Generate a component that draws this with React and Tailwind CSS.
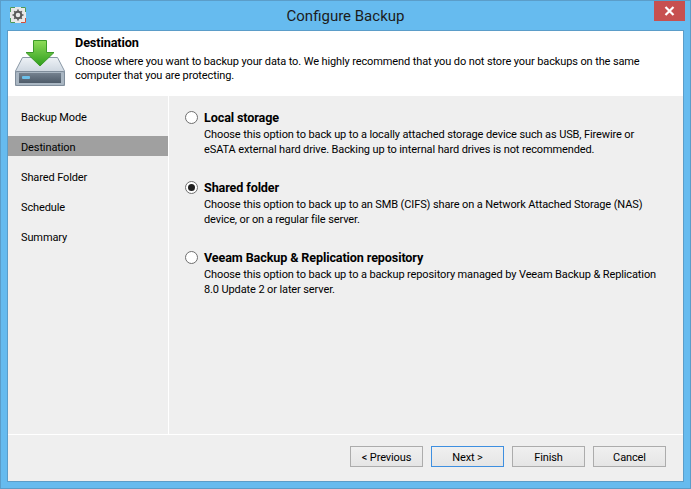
const steps = ['Backup Mode', 'Destination', 'Shared Folder', 'Schedule', 'Summary'];

const options = [
  {
    title: 'Local storage',
    desc: ['Choose this option to back up to a locally attached storage device such as USB, Firewire or', 'eSATA external hard drive. Backing up to internal hard drives is not recommended.'],
  },
  {
    title: 'Shared folder',
    checked: true,
    desc: ['Choose this option to back up to an SMB (CIFS) share on a Network Attached Storage (NAS)', 'device, or on a regular file server.'],
  },
  {
    title: 'Veeam Backup & Replication repository',
    desc: ['Choose this option to back up to a backup repository managed by Veeam Backup & Replication', '8.0 Update 2 or later server.'],
  },
];

function AppIcon() {
  return (
    <div className="w-[16px] h-[16px] bg-[#e8e8e8]">
      <svg width="16" height="16" viewBox="0 0 16 16">
        <path d="M0.500 5V0.500H5" fill="none" stroke="#4c9a5a" />
        <path d="M11 0.500h4.500V5" fill="none" stroke="#4c9a5a" />
        <path d="M0.500 11v4.500H5" fill="none" stroke="#4c9a5a" />
        <path d="M11 15.500h4.500V11" fill="none" stroke="#d0503c" />
        <circle cx="8" cy="8" r="3.300" fill="none" stroke="#5a5a5a" strokeWidth="2" />
        <path d="M8 2.500v2M8 11.500v2M2.500 8h2M11.500 8h2M4.200 4.200l1.400 1.400M10.400 10.400l1.400 1.400M4.200 11.800l1.400-1.400M10.400 5.600l1.400-1.400" stroke="#5a5a5a" strokeWidth="1.600" />
      </svg>
    </div>
  );
}

function DriveIcon() {
  return (
    <svg width="50" height="46" viewBox="0 0 50 46">
      <defs>
        <linearGradient id="top" x1="0" y1="0" x2="0" y2="1">
          <stop offset="0" stopColor="#eef2f6" />
          <stop offset="1" stopColor="#aebccb" />
        </linearGradient>
        <linearGradient id="front" x1="0" y1="0" x2="0" y2="1">
          <stop offset="0" stopColor="#74818f" />
          <stop offset="1" stopColor="#4d5a68" />
        </linearGradient>
        <linearGradient id="arrow" x1="0" y1="0" x2="0" y2="1">
          <stop offset="0" stopColor="#8fdc5a" />
          <stop offset="1" stopColor="#2f9e1e" />
        </linearGradient>
      </defs>
      <path d="M7.500 17.500h35l7 13.500v14.500H0.500V31z" fill="url(#top)" stroke="#8a98a6" />
      <rect x="0.500" y="31.500" width="49" height="14" rx="1.500" fill="#a9b6c2" stroke="#7f8d9b" />
      <rect x="4" y="33" width="42" height="10" fill="url(#front)" />
      <rect x="7" y="36" width="8" height="3" rx="1" fill="#6cc0ea" />
      <path d="M18.500 0.500h13v12H39L25 26 11 12.500h7.500z" fill="url(#arrow)" stroke="#3c9a2a" />
    </svg>
  );
}

function Radio({ checked }) {
  return (
    <span className="w-[13px] h-[13px] rounded-full border border-[#6f6f6f] bg-white flex items-center justify-center shrink-0">
      {checked && <span className="w-[7px] h-[7px] rounded-full bg-[#1f1f1f]" />}
    </span>
  );
}

function Btn({ children, focused }) {
  return (
    <button className={`w-[73px] h-[21px] border pt-[2px] text-[11px] leading-[17px] text-black bg-gradient-to-b from-[#f0f0f0] to-[#e5e5e5] ${focused ? 'border-[#3e8fe0]' : 'border-[#acacac]'}`}>
      {children}
    </button>
  );
}

export default function App() {
  return (
    <div className="w-[691px] h-[489px] bg-[#66bbef] border border-[#5b9dc9] flex flex-col overflow-hidden whitespace-nowrap tracking-[-0.115px]" style={{ fontFamily: 'Roboto, "Liberation Sans", sans-serif' }}>
      {/* title bar */}
      <div className="h-[29px] shrink-0 flex items-start">
        <div className="w-[52px] pl-[9px] pt-[6px]">
          <AppIcon />
        </div>
        <div className="flex-1 text-center text-[15px] leading-[30px] tracking-normal text-[#1c1c1c]">Configure Backup</div>
        <div className="w-[52px] flex justify-end pr-[5px]">
          <div className="w-[31px] h-[20px] bg-[#c75050] flex items-center justify-center">
            <svg width="11" height="10" viewBox="0 0 11 10">
              <path d="M1.500 1l8 8M9.500 1l-8 8" stroke="white" strokeWidth="2.200" />
            </svg>
          </div>
        </div>
      </div>

      <div className="mx-[6px] mb-[6px] flex-1 min-h-0 border border-[#5b9dc9] bg-[#efefef] flex flex-col">
        {/* header */}
        <div className="h-[65px] shrink-0 bg-white flex">
          <div className="w-[67px] shrink-0 pl-[7px] pt-[9px]">
            <DriveIcon />
          </div>
          <div className="pt-[4px] text-[11px] leading-[14px] text-black">
            <div className="font-bold text-[12.7px] leading-[15px]">Destination</div>
            <div className="mt-[5px]">Choose where you want to backup your data to. We highly recommend that you do not store your backups on the same</div>
            <div>computer that you are protecting.</div>
          </div>
        </div>

        <div className="flex-1 min-h-0 flex">
          {/* step list */}
          <div className="w-[160px] shrink-0 pt-[10px] flex flex-col gap-[10px]">
            {steps.map((s) => (
              <div key={s} className={`h-[20px] pl-[13px] text-[11px] leading-[23px] text-black ${s === 'Destination' ? 'bg-[#a0a0a0]' : ''}`}>
                {s}
              </div>
            ))}
          </div>
          <div className="w-[1px] shrink-0 bg-white" />

          {/* options */}
          <div className="flex-1 pl-[16px] pt-[13px] flex flex-col gap-[22px]">
            {options.map((o) => (
              <div key={o.title}>
                <div className="flex items-center gap-[6px] h-[17px]">
                  <Radio checked={o.checked} />
                  <span className="text-[12.6px] leading-[19px] font-bold text-black">{o.title}</span>
                </div>
                <div className="pl-[19px] mt-[1px] text-[11px] leading-[15px] text-black">
                  {o.desc.map((d) => (
                    <div key={d}>{d}</div>
                  ))}
                </div>
              </div>
            ))}
          </div>
        </div>

        {/* footer */}
        <div className="h-[47px] shrink-0 border-t border-white flex justify-end items-start gap-[8px] pt-[11px] pr-[17px]">
          <Btn>&lt; Previous</Btn>
          <Btn focused>Next &gt;</Btn>
          <Btn>Finish</Btn>
          <Btn>Cancel</Btn>
        </div>
      </div>
    </div>
  );
}
